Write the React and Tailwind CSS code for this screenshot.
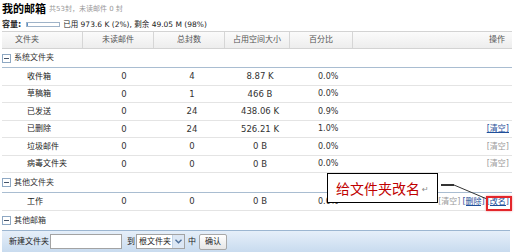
import React from 'react';

const rows = [
  { name: '收件箱', unread: 0, total: 4, size: '8.87 K', pct: '0.0%', h: 'h-[18px]' },
  { name: '草稿箱', unread: 0, total: 1, size: '466 B', pct: '0.0%', h: 'h-[17px]' },
  { name: '已发送', unread: 0, total: 24, size: '438.06 K', pct: '0.9%', h: 'h-[18px]' },
  { name: '已删除', unread: 0, total: 24, size: '526.21 K', pct: '1.0%', h: 'h-[17px]', clear: 'link' },
  { name: '垃圾邮件', unread: 0, total: 0, size: '0 B', pct: '0.0%', h: 'h-[18px]', clear: 'gray' },
  { name: '病毒文件夹', unread: 0, total: 0, size: '0 B', pct: '0.0%', h: 'h-[17px]', clear: 'gray' },
];

const MinusBox = () => (
  <span className="flex items-center justify-center w-[9px] h-[9px] border border-[#8ea8c3] bg-white">
    <span className="block w-[5px] h-[1px] bg-[#44546a]" />
  </span>
);

const Group = ({ label, h, line = true }) => (
  <div className={`flex items-center gap-[3px] ${h} ${line ? 'border-b border-[#a9bdd1]' : ''}`}>
    <MinusBox />
    <span className="text-[8px] text-[#333]">{label}</span>
  </div>
);

const Link = ({ children }) => (
  <span className="text-[#1f4f9a] underline">{children}</span>
);

const Gray = ({ children }) => <span className="text-[#9a9a9a]">{children}</span>;

const Row = ({ r, action }) => (
  <div className={`flex items-center border-b border-[#e4e4e4] ${r.h}`}>
    <div className="w-[86px] pl-[25px] text-[8px] text-[#222]">{r.name}</div>
    <div className="w-[72px] text-center text-[8.5px] text-[#333]">{r.unread}</div>
    <div className="w-[64px] text-center text-[8.5px] text-[#333]">{r.total}</div>
    <div className="w-[72px] text-center text-[8.5px] text-[#333]">{r.size}</div>
    <div className="w-[60px] pl-[22px] text-[8px] text-[#333]">{r.pct}</div>
    <div className="flex-1 flex justify-end gap-[2px] pr-[3px] text-[8px]">{action}</div>
  </div>
);

export default function App() {
  return (
    <div className="relative w-[516px] h-[252px] overflow-hidden bg-white font-['DejaVu_Sans','Noto_Sans_CJK_SC',sans-serif] leading-none">
      <div className="flex items-center h-[19px] pl-[2px]">
        <span className="text-[11px] font-bold text-black">我的邮箱</span>
        <span className="ml-[3px] text-[7px] text-[#999]">共53封，未读邮件 0 封</span>
      </div>
      <div className="flex items-center h-[11px] pl-[2px]">
        <span className="text-[8px] font-bold text-[#222]">容量:</span>
        <span className="ml-[5px] w-[34px] h-[5px] border border-[#9fb3c8] bg-white">
          <span className="block w-[1px] h-full bg-[#5b8fc7]" />
        </span>
        <span className="ml-[3px] text-[7.5px] text-[#222]">已用 973.6 K (2%), 剩余 49.05 M (98%)</span>
      </div>

      <div className="mx-[2px] mt-[1px] w-[510px]">
        <div className="flex h-[18px] border-y border-[#d3d3d3] bg-gradient-to-b from-[#fbfbfb] to-[#ededed] text-[8px] text-[#555]">
          <div className="w-[80px] pl-[13px] flex items-center">文件夹</div>
          <div className="w-[71px] border-l border-[#d6d6d6] flex items-center justify-center">未读邮件</div>
          <div className="w-[71px] border-l border-[#d6d6d6] flex items-center justify-center">总封数</div>
          <div className="w-[65px] border-l border-[#d6d6d6] flex items-center justify-center">占用空间大小</div>
          <div className="w-[63px] border-l border-[#d6d6d6] flex items-center justify-center">百分比</div>
          <div className="flex-1 border-l border-[#d6d6d6] flex items-center justify-end pr-[7px]">操作</div>
        </div>

        <Group label="系统文件夹" h="h-[19px]" />
        {rows.map((r) => (
          <Row
            key={r.name}
            r={r}
            action={
              r.clear === 'link' ? <Link>[清空]</Link> : r.clear === 'gray' ? <Gray>[清空]</Gray> : null
            }
          />
        ))}

        <Group label="其他文件夹" h="h-[20px]" />
        <Row
          r={{ name: '工作', unread: 0, total: 0, size: '0 B', pct: '0.0%', h: 'h-[18px]' }}
          action={
            <>
              <Gray>[清空]</Gray>
              <Link>[删除]</Link>
              <Link>[改名]</Link>
            </>
          }
        />
        <Group label="其他邮箱" h="h-[19px]" line={false} />
      </div>

      <div className="ml-[2px] w-[508px] h-[22px] flex items-center pl-[7px] border-t border-[#9cb6d1] bg-gradient-to-b from-[#e6eff9] to-[#c8dbef] text-[8px] text-[#222]">
        <span>新建文件夹</span>
        <span className="ml-[1px] w-[72px] h-[15px] border border-[#a3a3a3] bg-white" />
        <span className="ml-[5px]">到</span>
        <span className="ml-[1px] flex items-center w-[49px] h-[15px] border border-[#a3a3a3] bg-white">
          <span className="flex-1 pl-[2px]">根文件夹</span>
          <span className="flex items-center justify-center w-[12px] h-full bg-[#dce7f4] border-l border-[#c2d3e6]">
            <svg width="7" height="5" viewBox="0 0 7 5">
              <path d="M0.5 0.8 L3.5 3.8 L6.5 0.8" fill="none" stroke="#4d6f9a" strokeWidth="1.4" />
            </svg>
          </span>
        </span>
        <span className="ml-[3px]">中</span>
        <span className="ml-[3px] flex items-center justify-center w-[28px] h-[16px] border border-[#a8a8a8] rounded-[2px] bg-gradient-to-b from-white to-[#e6e6e6]">
          确认
        </span>
      </div>

      <div className="absolute left-[327px] top-[173px] w-[111px] h-[30px] flex items-center pl-[8px] border border-black bg-white">
        <span className="text-[14px] text-[#c00000] font-['Noto_Sans_CJK_SC',sans-serif]">给文件夹改名</span>
        <span className="ml-[2px] mt-[4px] text-[8px] text-[#888]">↵</span>
      </div>

      <svg className="absolute left-0 top-0 pointer-events-none" width="516" height="252">
        <path d="M441 185 H454" stroke="#333" strokeWidth="2" fill="none" />
        <path d="M454 185 L487 199" stroke="#333" strokeWidth="1" fill="none" />
      </svg>

      <div className="absolute left-[486px] top-[196px] w-[26px] h-[15px] border-2 border-[#e3262b] shadow-[0_0_2px_rgba(227,38,43,0.5)]" />
    </div>
  );
}
